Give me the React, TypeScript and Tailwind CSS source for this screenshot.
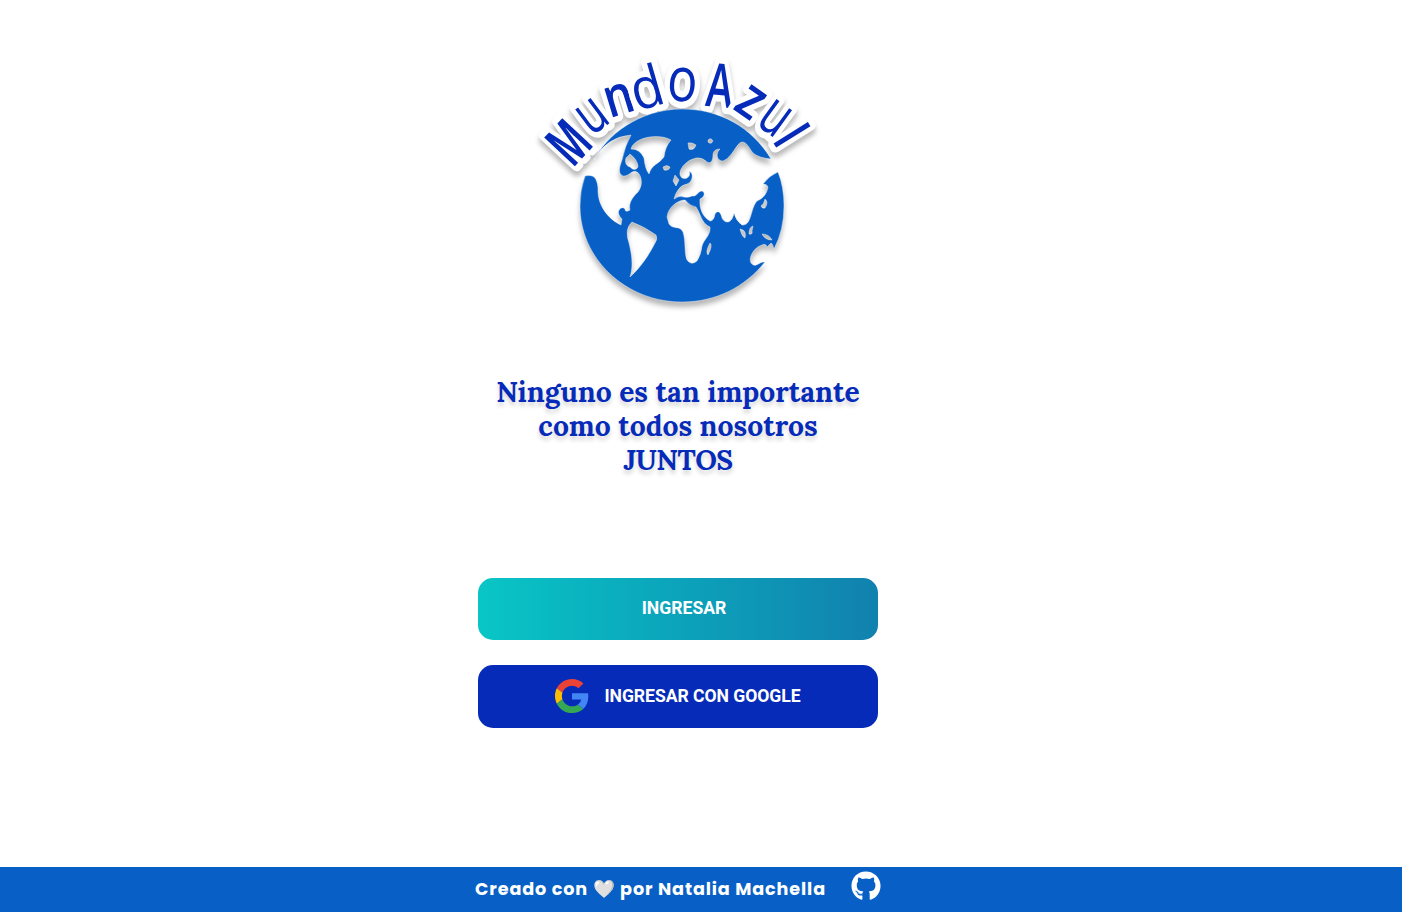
import { FaGithub } from "react-icons/fa";

type Letter = { ch: string; x: number; y: number; rotate: number; sx: number; sy: number; weight: number };

const letters: Letter[] = [
  { ch: "M", x: 584, y: 156.5, rotate: -47, sx: 0.62, sy: 1.05, weight: 700 },
  { ch: "u", x: 602, y: 129, rotate: -37, sx: 0.76, sy: 1.05, weight: 500 },
  { ch: "n", x: 623.5, y: 114, rotate: -17, sx: 0.82, sy: 0.98, weight: 600 },
  { ch: "d", x: 652, y: 107, rotate: -16, sx: 0.94, sy: 1.02, weight: 500 },
  { ch: "o", x: 681, y: 101, rotate: 4, sx: 0.9, sy: 1.1, weight: 500 },
  { ch: "A", x: 718, y: 107, rotate: 5, sx: 0.72, sy: 1.08, weight: 600 },
  { ch: "z", x: 741.5, y: 115, rotate: 35, sx: 0.88, sy: 1.02, weight: 600 },
  { ch: "u", x: 765, y: 131.5, rotate: 36, sx: 0.76, sy: 1.1, weight: 500 },
  { ch: "l", x: 775, y: 145.5, rotate: 58, sx: 0.76, sy: 0.95, weight: 600 },
];

const land = [
  "M594 160C606 136 639 109 682 109C719 109 752 127 771 159Q759 158 753 153C749 148 747 142 742 142C737 142 732 158 723 161C717 161 715 154 720 149Q714 149 713 154C713 161 711 164 707 162Q702 157 696 158Q689 159 683 166Q679 171 680 175Q682 180 687 178Q691 176 689 171Q693 173 692 178Q691 183 687 184Q681 185 678 190Q675 194 674 199Q679 195 684 197Q688 198 692 196C697 197 698 191 702 191C706 193 704 197 700 199C699 209 703 217 710 221Q714 221 715 214C718 209 721 213 722 218C725 224 732 224 734 213Q736 221 742 225C752 226 750 209 757 201C764 198 767 193 768 187Q767 184 763 184Q770 175 778 172Q784 187 784 206Q784 230 774 249Q772 241 770 244L767 247Q766 243 762 245C754 247 748 258 751 263C756 269 759 261 765 262C745 287 716 302 682 302C626 302 580 259 580 206Q580 190 585 176C594 174 597 178 598 188C597 205 608 219 621 225L622 219Q617 214 619 210Q622 206 625 209Q625 213 630 210C628 202 634 196 638 192C644 184 641 174 637 172C632 169 629 177 623 176C618 174 619 168 622 160Q625 146 631 135Q606 137 594 160Z",
  "M631 149C634 137 659 133 671 140Q665 147 664 157C658 165 652 164 649 174Q645 169 644 158Q640 149 631 149Z",
  "M626 158L630 154Q638 160 638 167Q635 172 630 167Q624 165 626 158Z",
  "M632 222Q645 227 656 235Q658 239 655 243C649 255 641 267 630 277C634 264 631 252 629 243Q624 229 632 222Z",
  "M667 217C668 207 678 200 685 200Q690 206 696 207C701 214 701 223 710 227C711 235 704 239 702 246Q701 255 697 261Q691 266 687 260C684 253 686 242 683 232C680 225 673 230 669 224Z",
  "M663 167Q667 164 670 167Q669 171 664 170Z",
  "M675 175L679 180L676 186L673 181Z",
  "M688 143Q692 142 696 145Q694 151 689 149Z",
  "M708 140Q711 137 713 141Q711 145 708 142Z",
  "M765 199Q769 202 765 208Q762 209 761 206Q764 204 765 199Z",
  "M740 229Q747 230 745 238Q742 237 740 229Z",
  "M753 226Q749 227 749 234Q753 235 752 231Z",
  "M762 234Q769 234 772 240Q765 240 762 234Z",
  "M710 243Q713 245 708 255Q705 252 710 243Z",
].join(" ");

function Logo() {
  return (
    <svg width="290" height="270" viewBox="533 50 290 270" className="block overflow-visible" aria-label="Mundo Azul">
      <defs>
        <filter id="logoShadow" x="-10%" y="-10%" width="120%" height="125%" colorInterpolationFilters="sRGB">
          <feDropShadow dx="0" dy="5" stdDeviation="2.5" floodColor="#000" floodOpacity="0.28" />
        </filter>
      </defs>
      <g filter="url(#logoShadow)">
        <g
          fontFamily="'Open Sans', sans-serif"
          fontSize="56"
          textAnchor="middle"
          fill="#062bb9"
          stroke="#fff"
          strokeWidth="12"
          strokeLinejoin="round"
          paintOrder="stroke"
        >
          {letters.map((l, i) => (
            <text
              key={i}
              fontWeight={l.weight}
              transform={`translate(${l.x} ${l.y}) rotate(${l.rotate}) scale(${l.sx} ${l.sy})`}
            >
              {l.ch}
            </text>
          ))}
        </g>
        <path d={land} fill="#0860c6" fillRule="evenodd" stroke="#fff" strokeWidth="0.4" />
      </g>
    </svg>
  );
}

export default function App() {
  return (
    <div className="flex h-[912px] flex-col overflow-hidden bg-white">
      <main className="flex flex-1 flex-col items-center pr-[46px] pt-[50px]">
        <Logo />
        <h1 className="mt-[55px] w-[400px] text-center font-['Lora',serif] text-[28.2px] font-bold leading-[34px] text-[#062bb9] [text-shadow:0_4px_4px_rgba(0,0,0,0.16)]">
          Ninguno es tan importante
          <br />
          como todos nosotros
          <br />
          <span className="tracking-[-0.6px]">JUNTOS</span>
        </h1>
        <div className="mt-[101px] flex w-[400px] flex-col gap-[25px] font-['Roboto',sans-serif] text-[17.6px] font-bold text-white">
          <button className="flex h-[62px] items-center justify-center rounded-[15px] bg-linear-to-r from-[#09c6c6] to-[#1181ae] pb-[2px] pl-3">
            INGRESAR
          </button>
          <button className="flex h-[63px] items-center justify-center gap-[15px] rounded-[15px] bg-[#062bb9] tracking-[-0.05px]">
            <svg width="34" height="34" viewBox="0 0 48 48" className="-mt-px">
              <path fill="#EA4335" d="M24 9.500c3.540 0 6.710 1.220 9.210 3.600l6.850-6.850C35.900 2.380 30.470 0 24 0 14.620 0 6.510 5.380 2.560 13.220l7.980 6.190C12.430 13.720 17.740 9.500 24 9.500z" />
              <path fill="#4285F4" d="M46.980 24.550c0-1.570-.15-3.090-.38-4.550H24v9.020h12.940c-.58 2.960-2.260 5.480-4.780 7.180l7.730 6c4.510-4.180 7.090-10.360 7.090-17.650z" />
              <path fill="#FBBC05" d="M10.530 28.590c-.48-1.450-.76-2.990-.76-4.590s.27-3.140.76-4.590l-7.980-6.190C.92 16.460 0 20.120 0 24s.92 7.540 2.560 10.780l7.970-6.190z" />
              <path fill="#34A853" d="M24 48c6.480 0 11.930-2.130 15.890-5.810l-7.730-6c-2.150 1.450-4.920 2.300-8.160 2.300-6.260 0-11.570-4.220-13.470-9.910l-7.980 6.190C6.510 42.620 14.620 48 24 48z" />
            </svg>
            INGRESAR CON GOOGLE
          </button>
        </div>
      </main>
      <footer className="flex h-[45px] items-center justify-center bg-[#0860c6] pr-[46px] font-['Poppins',sans-serif] text-[17.6px] font-bold tracking-[0.87px] text-white">
        <p className="whitespace-nowrap pb-px">Creado con 🤍 por Natalia Machella</p>
        <FaGithub className="mb-2 ml-[25px] size-[30px]" />
      </footer>
    </div>
  );
}
